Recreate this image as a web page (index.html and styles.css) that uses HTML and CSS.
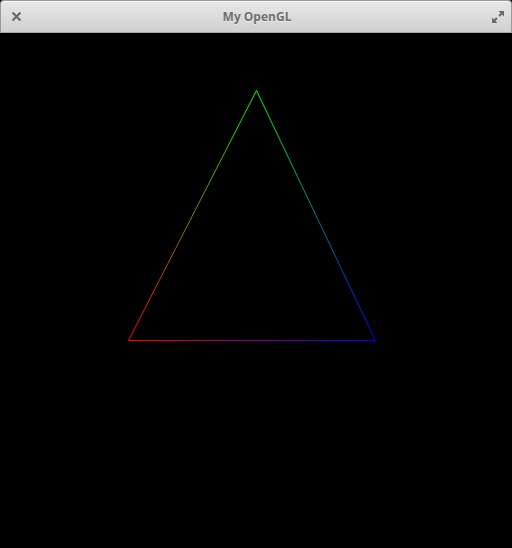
FILE: index.html
```html
<!DOCTYPE html>
<html>
<head>
<meta charset="utf-8">
<link rel="stylesheet" href="styles.css">
</head>
<body>
<div class="window">
  <header class="titlebar">
    <button class="btn close" aria-label="Close">
      <svg width="9" height="9" viewBox="0 0 9 9"><path d="M1.3 1.3 L7.7 7.7 M7.7 1.3 L1.3 7.7" stroke="#6a6a6a" stroke-width="2.2" stroke-linecap="square"/></svg>
    </button>
    <div class="title">My OpenGL</div>
    <button class="btn maximize" aria-label="Maximize">
      <svg width="12" height="12" viewBox="0 0 12 12" fill="#6a6a6a">
        <path d="M6.5 0 H12 V5.5 L10 3.5 L7.8 5.7 L6.3 4.2 L8.5 2 Z"/>
        <path d="M5.5 12 H0 V6.5 L2 8.5 L4.2 6.3 L5.7 7.8 L3.5 10 Z"/>
      </svg>
    </button>
  </header>
  <main class="canvas">
    <svg width="512" height="514" viewBox="0 34 512 514">
      <defs>
        <linearGradient id="gl" gradientUnits="userSpaceOnUse" x1="256.5" y1="90.5" x2="128.5" y2="340.5">
          <stop offset="0" stop-color="#00ff00"/>
          <stop offset="1" stop-color="#ff0000"/>
        </linearGradient>
        <linearGradient id="gr" gradientUnits="userSpaceOnUse" x1="256.5" y1="90.5" x2="375.5" y2="340.5">
          <stop offset="0" stop-color="#00ff00"/>
          <stop offset="1" stop-color="#0000ff"/>
        </linearGradient>
        <linearGradient id="gb" gradientUnits="userSpaceOnUse" x1="128.5" y1="340.5" x2="375.5" y2="340.5">
          <stop offset="0" stop-color="#ff0000"/>
          <stop offset="1" stop-color="#0000ff"/>
        </linearGradient>
      </defs>
      <line x1="256.5" y1="90.5" x2="128.5" y2="340.5" stroke="url(#gl)" stroke-width="1"/>
      <line x1="256.5" y1="90.5" x2="375.5" y2="340.5" stroke="url(#gr)" stroke-width="1"/>
      <line x1="128.5" y1="340.5" x2="375.5" y2="340.5" stroke="url(#gb)" stroke-width="1.2"/>
    </svg>
  </main>
</div>
</body>
</html>
```

FILE: styles.css
```css
html, body {
  margin: 0;
  padding: 0;
  background: #000;
}
.window {
  width: 512px;
  height: 548px;
  display: flex;
  flex-direction: column;
  background: #000;
  overflow: hidden;
}
.titlebar {
  height: 33px;
  box-sizing: border-box;
  display: flex;
  align-items: center;
  justify-content: space-between;
  background: linear-gradient(to bottom, #e8e8e8 0%, #dcdcdc 50%, #d0d0d0 100%);
  border: 1px solid #9a9a9a;
  border-bottom: 1px solid #a8a8a8;
  border-radius: 4px 4px 0 0;
  box-shadow: inset 0 1px 0 #f6f6f6;
  padding: 0 7px 0 9px;
  flex: none;
}
.btn {
  background: none;
  border: 0;
  padding: 0;
  width: 12px;
  height: 14px;
  display: flex;
  align-items: center;
  justify-content: center;
}
.title {
  font-family: "Open Sans", "DejaVu Sans", sans-serif;
  font-weight: 700;
  font-size: 12px;
  color: #707070;
  text-shadow: 0 1px 0 rgba(255,255,255,0.5);
}
.canvas {
  flex: 1;
  background: #000;
  margin-top: 1px;
}
.canvas svg {
  display: block;
}
```
